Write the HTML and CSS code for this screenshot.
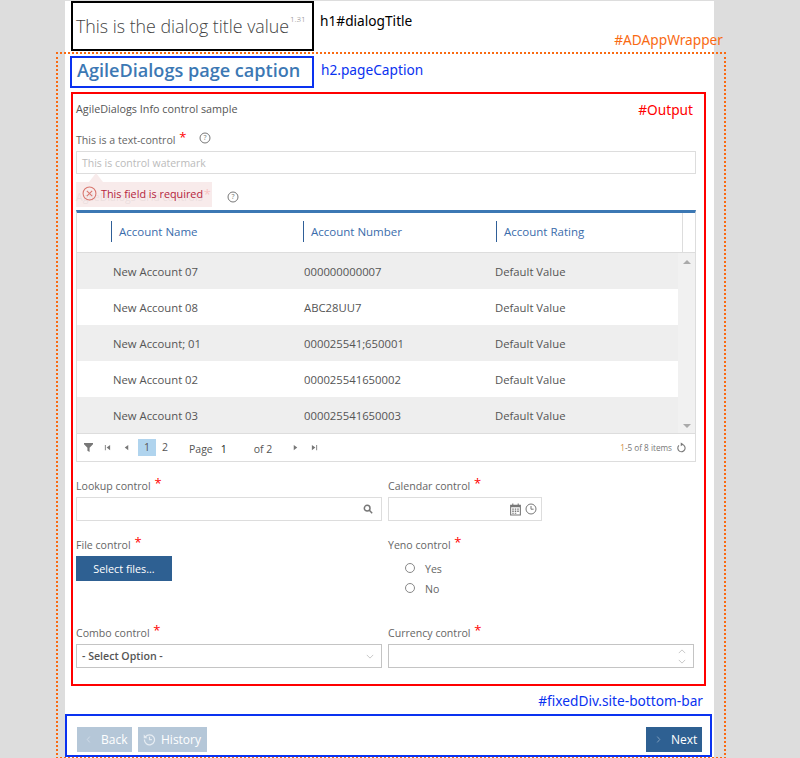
FILE: index.html
```html
<!DOCTYPE HTML>
<html>
<head>
<meta charset="utf-8">
<link rel="stylesheet" href="styles.css">
</head>
<body>
  <div class="page">
    <div class="head-row">
      <h1 id="dialogTitle">This is the dialog title value<sup>1.31</sup></h1>
      <span class="note note-black">h1#dialogTitle</span>
      <span class="note note-orange wrap-note">#ADAppWrapper</span>
    </div>
    <div id="ADAppWrapper">
      <div class="caption-row">
        <h2 class="pageCaption">AgileDialogs page caption</h2>
        <span class="note note-blue">h2.pageCaption</span>
      </div>
      <div id="Output">
        <span class="note note-red output-note">#Output</span>
        <p class="info">AgileDialogs Info control sample</p>
        <div class="field-text">
          <label class="lbl">This is a text-control <span class="req">*</span>
            <svg class="help" viewBox="0 0 12 12"><circle cx="6" cy="6" r="5" /><text x="6" y="8.4" text-anchor="middle">?</text></svg>
          </label>
          <div class="input input-text"><span class="watermark">This is control watermark</span></div>
        </div>
        <div class="field-grid">
          <label class="lbl lbl-grid"><span class="grid-name">AgileDialogs Grid controls</span> <span class="req">*</span>
            <svg class="help" viewBox="0 0 12 12"><circle cx="6" cy="6" r="5" /><text x="6" y="8.4" text-anchor="middle">?</text></svg>
          </label>
          <div class="tip">
            <svg class="tip-icon" viewBox="0 0 14 14"><circle cx="7" cy="7" r="6" /><path d="M4.5 4.5l5 5M9.5 4.5l-5 5" /></svg>
            This field is required
          </div>
        </div>

        <div class="grid">
          <div class="grid-head">
            <div class="th th-pad"></div>
            <div class="th"><span>Account Name</span></div>
            <div class="th th-num"><span>Account Number</span></div>
            <div class="th th-last"><span>Account Rating</span></div>
            <div class="th-scroll"></div>
          </div>
          <div class="grid-body">
            <div class="rows">
              <div class="tr alt"><span>New Account 07</span><span>000000000007</span><span>Default Value</span></div>
              <div class="tr"><span>New Account 08</span><span>ABC28UU7</span><span>Default Value</span></div>
              <div class="tr alt"><span>New Account; 01</span><span>000025541;650001</span><span>Default Value</span></div>
              <div class="tr"><span>New Account 02</span><span>000025541650002</span><span>Default Value</span></div>
              <div class="tr alt"><span>New Account 03</span><span>000025541650003</span><span>Default Value</span></div>
            </div>
            <div class="scrollbar">
              <i class="tri tri-up"></i>
              <i class="tri tri-down"></i>
            </div>
          </div>
          <div class="pager">
            <svg class="ico-filter" viewBox="0 0 10 10"><path d="M0 0h10v1.4L6.2 5.2V10L3.8 8.6V5.2L0 1.4z" /></svg>
            <svg class="ico-nav nav-first" viewBox="0 0 8 8"><path d="M1 1h1v6H1zM7 1v6L3 4z" /></svg>
            <svg class="ico-nav nav-prev" viewBox="0 0 8 8"><path d="M6 1v6L2 4z" /></svg>
            <span class="pg pg-on">1</span>
            <span class="pg">2</span>
            <span class="pg-label">Page</span>
            <span class="pg-cur">1</span>
            <span class="pg-of">of 2</span>
            <svg class="ico-nav nav-next" viewBox="0 0 8 8"><path d="M2 1v6l4-3z" /></svg>
            <svg class="ico-nav nav-last" viewBox="0 0 8 8"><path d="M1 1v6l4-3zM6 1h1v6H6z" /></svg>
            <span class="pg-items"><b>1</b>-5 of 8 items</span>
            <svg class="ico-refresh" viewBox="0 0 12 12"><path d="M6.8 2.2A4 4 0 1 1 3.2 3.2" /><path class="fill" d="M5.2 0v4.2L8.2 2z" /></svg>
          </div>
        </div>

        <div class="form-grid">
          <div class="cell cell-lookup">
            <label class="lbl">Lookup control <span class="req">*</span></label>
            <div class="input input-form">
              <svg class="ico-search" viewBox="0 0 12 12"><circle cx="5" cy="5" r="3.4" /><path d="M7.6 7.6L11 11" /></svg>
            </div>
          </div>
          <div class="cell cell-lookup">
            <label class="lbl">Calendar control <span class="req">*</span></label>
            <div class="input input-form input-cal">
              <svg class="ico-cal" viewBox="0 0 12 12"><path class="fill" d="M1 1.5h2V.5h1v1h4V.5h1v1h2v10H1zM2 4v6.5h8V4z" /><path class="fill" d="M3 5h1.4v1.2H3zM5.3 5h1.4v1.2H5.3zM7.6 5H9v1.2H7.6zM3 7h1.4v1.2H3zM5.3 7h1.4v1.2H5.3zM7.6 7H9v1.2H7.6zM3 9h1.4v1H3zM5.3 9h1.4v1H5.3z" /></svg>
              <svg class="ico-clock" viewBox="0 0 12 12"><circle cx="6" cy="6" r="5" /><path d="M6 3v3.2h2.6" /></svg>
            </div>
          </div>
          <div class="cell cell-mid">
            <label class="lbl">File control <span class="req">*</span></label>
            <button class="btn-select">Select files...</button>
          </div>
          <div class="cell cell-mid">
            <label class="lbl">Yeno control <span class="req">*</span></label>
            <div class="radios">
              <div class="radio"><i></i>Yes</div>
              <div class="radio"><i></i>No</div>
            </div>
          </div>
          <div class="cell">
            <label class="lbl">Combo control <span class="req">*</span></label>
            <div class="input input-form input-dark">
              <span class="combo-val">- Select Option -</span>
              <svg class="ico-chev" viewBox="0 0 10 6"><path d="M1 1l4 4 4-4" /></svg>
            </div>
          </div>
          <div class="cell">
            <label class="lbl">Currency control <span class="req">*</span></label>
            <div class="input input-form input-dark input-cur">
              <div class="spin">
                <svg class="ico-chev" viewBox="0 0 10 6"><path d="M1 5l4-4 4 4" /></svg>
                <svg class="ico-chev" viewBox="0 0 10 6"><path d="M1 1l4 4 4-4" /></svg>
              </div>
            </div>
          </div>
        </div>
      </div>
      <div class="note note-blue bar-note">#fixedDiv.site-bottom-bar</div>
      <div id="fixedDiv" class="site-bottom-bar">
        <button class="btn btn-off btn-back"><svg class="ico-btn" viewBox="0 0 6 10"><path d="M4.5 1.5L1.5 5l3 3.5" /></svg>Back</button>
        <button class="btn btn-off btn-history"><svg class="ico-hist" viewBox="0 0 14 14"><path d="M2.6 4.2A5.4 5.4 0 1 1 1.6 7" /><path d="M7 4v3.2h2.6" /><path class="fill" d="M.8 1.6v4h4z" /></svg>History</button>
        <button class="btn btn-next"><svg class="ico-btn" viewBox="0 0 6 10"><path d="M1.5 1.5L4.5 5l-3 3.5" /></svg>Next</button>
      </div>
    </div>
  </div>
</body>
</html>
```

FILE: styles.css
```css
* {
  padding: 0;
  margin: 0;
  box-sizing: border-box;
}
html, body {
  height: 758px;
  overflow: hidden;
}
body {
  background: #ddd;
  font-family: "Open Sans", "Noto Sans", sans-serif;
  font-size: 11px;
  color: #555;
}
svg {
  display: block;
  fill: none;
  stroke: #777;
}
svg .fill {
  fill: #777;
  stroke: none;
}
.page {
  width: 649px;
  height: 757px;
  margin: 1px 0 0 65px;
  background: #fff;
}

/* annotations */
.note {
  font-family: "Noto Sans", sans-serif;
  font-size: 13.7px;
  line-height: 18px;
}
.note-black { color: #000; }
.note-blue { color: #0a32f0; }
.note-red { color: #f00; }
.note-orange { color: #f96a12; }

.head-row {
  display: flex;
  height: 51px;
  padding-left: 6px;
}
.head-row .note-black {
  margin: 11px 0 0 6px;
}
.wrap-note {
  margin: 30px -9px 0 auto;
}
#dialogTitle {
  width: 243px;
  height: 50px;
  padding: 11px 0 0 3px;
  border: 2px solid #000;
  font-size: 17.8px;
  line-height: 25px;
  font-weight: 300;
  color: #444;
  white-space: nowrap;
}
#dialogTitle sup {
  font-size: 8px;
  line-height: 1;
  vertical-align: 11px;
  color: #777;
  margin-left: 1px;
}

/* wrapper sits wider than the white page */
#ADAppWrapper {
  width: 670px;
  height: 707px;
  margin-left: -9px;
  padding: 0 12px 0 7px;
  border: 2px dotted #f96a12;
}
.caption-row {
  display: flex;
  align-items: center;
  margin: 2px 0 0 5px;
}
.caption-row .note {
  margin: -5px 0 0 7px;
}
.pageCaption {
  width: 244px;
  height: 32px;
  padding-left: 5px;
  border: 2px solid #0a32f0;
  font-size: 18.1px;
  line-height: 24px;
  font-weight: 600;
  color: #3c78b4;
  white-space: nowrap;
}

#Output {
  position: relative;
  width: 635px;
  height: 594px;
  margin: 4px 0 0 6px;
  padding: 6px 8px 0 3px;
  border: 2px solid #f00;
}
.output-note {
  position: absolute;
  top: 7px;
  right: 11px;
}
.info {
  line-height: 18px;
  font-size: 10.8px;
}
.lbl {
  display: flex;
  align-items: flex-start;
  height: 18px;
  line-height: 18px;
  font-size: 10.6px;
  color: #666;
  white-space: pre;
}
.req {
  color: #f00;
  font-size: 13px;
  line-height: 13px;
  margin-left: 1px;
}
.help {
  width: 12px;
  height: 12px;
  margin: 1px 0 0 13px;
}
.help text {
  font-size: 7px;
  fill: #777;
  stroke: none;
}
.field-text {
  margin-top: 13px;
}
.input {
  display: flex;
  align-items: center;
  background: #fff;
  border: 1px solid #ddd;
}
.input-text {
  height: 23px;
  margin-top: 2px;
  padding-left: 5px;
}
.watermark {
  color: #bbb;
  font-size: 10.5px;
}

/* grid label with validation tip laid over it */
.field-grid {
  position: relative;
  margin-top: 13px;
  height: 23px;
}
.lbl-grid {
  padding-top: 1px;
  height: 19px;
}
.lbl-grid .help {
  margin: 3px 0 0 16px;
}
.grid-name {
  color: #aaa;
}
.tip {
  position: absolute;
  top: -5px;
  left: 0;
  display: flex;
  align-items: center;
  width: 136px;
  height: 25px;
  padding: 0 0 2px 6px;
  background: rgba(247, 231, 231, .84);
  color: #b5243c;
  font-size: 10.8px;
}
.tip::before {
  content: "";
  position: absolute;
  top: -9px;
  left: 13px;
  border: 7px solid transparent;
  border-top: 0;
  border-bottom: 9px solid rgba(247, 231, 231, .84);
}
.tip-icon {
  width: 15px;
  height: 15px;
  margin-right: 4px;
  stroke: #d9776f;
}

.grid {
  width: 620px;
  border-top: 3px solid #3c78b4;
  border-left: 1px solid #ddd;
  border-right: 1px solid #ddd;
  border-bottom: 1px solid #ddd;
}
.grid-head {
  display: flex;
  height: 40px;
  border-bottom: 1px solid #ddd;
}
.th {
  width: 192px;
  padding-top: 8px;
  font-size: 11.5px;
  color: #3a6cab;
}
.th span {
  display: block;
  height: 21px;
  line-height: 21px;
  padding-left: 7px;
  border-left: 1px solid #2f5f98;
}
.th-pad {
  width: 34px;
}
.th-num {
  width: 193px;
}
.th-last {
  width: 186px;
}
.th-scroll {
  flex: 1;
  border-left: 1px solid #ddd;
}
.grid-body {
  display: flex;
}
.rows {
  width: 601px;
}
.tr {
  display: grid;
  grid-template-columns: 191px 191px 1fr;
  align-items: center;
  height: 36px;
  padding-left: 36px;
  font-size: 11.3px;
  color: #555;
  background: #fff;
}
.tr.alt {
  background: #eee;
}
.scrollbar {
  display: flex;
  flex-direction: column;
  justify-content: space-between;
  align-items: center;
  flex: 1;
  padding: 7px 0 5px;
  background: #f1f1f1;
}
.tri {
  display: block;
  border: 4px solid transparent;
}
.tri-up {
  border-top: 0;
  border-bottom: 4px solid #aaa;
}
.tri-down {
  border-bottom: 0;
  border-top: 4px solid #aaa;
}

.pager {
  display: flex;
  align-items: center;
  height: 28px;
  border-top: 1px solid #ddd;
  padding-left: 7px;
  font-size: 10.5px;
  color: #555;
}
.ico-filter {
  width: 9px;
  height: 9px;
}
.ico-filter path, .ico-nav path {
  fill: #777;
  stroke: none;
}
.ico-nav {
  width: 7px;
  height: 7px;
}
.nav-first { margin-left: 11px; }
.nav-prev { margin-left: 12px; }
.nav-next { margin-left: 20px; }
.nav-last { margin-left: 12px; }
.pg {
  width: 18px;
  height: 17px;
  line-height: 17px;
  text-align: center;
}
.pg-on {
  margin-left: 8px;
  background: #b0d4ee;
}
.pg + .pg {
  margin-left: 0;
}
.pg-label {
  margin: 2px 0 0 15px;
}
.pg-cur {
  width: 20px;
  margin: 2px 0 0 8px;
  color: #222;
}
.pg-of {
  margin: 2px 0 0 13px;
}
.pg-items {
  margin-left: auto;
  font-size: 8.2px;
  color: #777;
}
.pg-items b {
  font-weight: 400;
  color: #d08a3c;
}
.ico-refresh {
  width: 11px;
  height: 12px;
  margin: 0 8px 0 4px;
  stroke-width: 1.2;
}

.form-grid {
  display: grid;
  grid-template-columns: 306px 306px;
  column-gap: 6px;
  margin-top: 15px;
}
.cell {
  margin-bottom: 15px;
}
.cell-mid {
  height: 73px;
}
.input-form {
  height: 24px;
  margin-top: 2px;
  justify-content: flex-end;
  padding-right: 8px;
}
.input-cal {
  width: 154px;
  padding-right: 4px;
}
.input-dark {
  border-color: #c4c4c4;
  justify-content: space-between;
  padding: 0 7px 0 5px;
}
.input-cur {
  justify-content: flex-end;
}
.combo-val {
  font-size: 10.6px;
  font-weight: 600;
  color: #555;
}
.ico-search {
  width: 10px;
  height: 10px;
  stroke-width: 1.8;
}
.ico-cal {
  width: 13px;
  height: 13px;
}
.ico-clock {
  width: 12px;
  height: 12px;
  margin-left: 3px;
}
.ico-chev {
  width: 8px;
  height: 5px;
  stroke: #bbb;
}
.spin {
  display: flex;
  flex-direction: column;
  gap: 5px;
}
.btn-select {
  display: block;
  width: 96px;
  height: 25px;
  margin-top: 2px;
  border: 0;
  background: #2e6092;
  color: #fff;
  font: 400 10.8px "Open Sans", "Noto Sans", sans-serif;
}
.radios {
  padding: 5px 0 0 17px;
}
.radio {
  display: flex;
  align-items: center;
  height: 20px;
  font-size: 10.6px;
  color: #666;
}
.radio i {
  display: block;
  width: 10px;
  height: 10px;
  margin: -2px 10px 0 0;
  border: 1px solid #888;
  border-radius: 50%;
}

.bar-note {
  height: 28px;
  padding: 6px 9px 0 0;
  text-align: right;
}
.site-bottom-bar {
  display: flex;
  align-items: flex-start;
  gap: 6px;
  height: 43px;
  padding: 11px 8px 0 10px;
  border: 2px solid #0a32f0;
}
.btn {
  display: flex;
  align-items: center;
  height: 25px;
  border: 0;
  color: #fff;
  font: 400 12px "Open Sans", "Noto Sans", sans-serif;
}
.btn-off {
  background: #b5c7d8;
}
.btn-back {
  width: 55px;
  padding-left: 9px;
}
.btn-history {
  width: 69px;
  padding-left: 5px;
}
.btn-next {
  width: 56px;
  margin-left: auto;
  padding-left: 10px;
  background: #2e6092;
}
.ico-btn {
  width: 5px;
  height: 9px;
  margin-right: 10px;
  stroke: #d5dfe9;
}
.btn-next .ico-btn {
  stroke: #8fa9c4;
}
.ico-hist {
  width: 13px;
  height: 13px;
  margin-right: 5px;
  stroke: #e6ecf2;
  stroke-width: 1.3;
}
.ico-hist .fill {
  fill: #e6ecf2;
}
```
